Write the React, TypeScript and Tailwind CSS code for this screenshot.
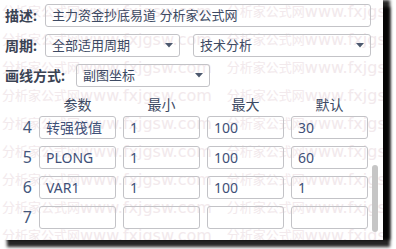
import React from 'react'

const labelCls = "text-[14px] font-bold text-[#3a4354]"
const boxCls = "h-[23px] border border-[#c3c3c7] rounded-[3px] flex items-center bg-transparent"

const Arrow = () => (
  <svg width="8" height="5" viewBox="0 0 8 5" className="shrink-0">
    <path d="M0 0 H8 L4 4.5 Z" fill="#4d596e" />
  </svg>
)

const Select: React.FC<{ text: string; className: string }> = ({ text, className }) => (
  <div className={`${boxCls} ${className} pl-[6px] pr-[6px] justify-between`}>
    <span className="text-[13px] text-[#3d4a63]">{text}</span>
    <Arrow />
  </div>
)

const Cell: React.FC<{ value?: string }> = ({ value }) => (
  <div className={`${boxCls} pl-[6px] text-[14px] text-[#3f5078]`}>{value}</div>
)

const Watermark = () => (
  <div className="absolute inset-0 overflow-hidden pointer-events-none">
    <div className="-mt-[2px] flex flex-col">
      {Array.from({ length: 10 }).map((_, i) => (
        <div key={i} className="h-[28px] flex items-center pl-[2px] gap-[15px] whitespace-nowrap text-[#f2e9ec]">
          {[0, 1].map((j) => (
            <span key={j} className="flex items-center">
              <span className="text-[13px]">分析家公式网</span>
              <span className="text-[16px] font-['DejaVu_Sans',sans-serif]">www.fxjgsw.com</span>
            </span>
          ))}
        </div>
      ))}
    </div>
  </div>
)

const rows = [
  { n: '4', name: '转强筏值', min: '1', max: '100', def: '30' },
  { n: '5', name: 'PLONG', min: '1', max: '100', def: '60' },
  { n: '6', name: 'VAR1', min: '1', max: '100', def: '1' },
  { n: '7', name: '', min: '', max: '', def: '' },
]

export default function App() {
  return (
    <div className="w-[396px] h-[249px] bg-white overflow-hidden font-['Noto_Sans','Noto_Sans_CJK_SC',sans-serif]">
      <div className="relative w-[383px] h-[240px] bg-white shadow-[7px_7px_3px_rgba(0,0,0,0.85),7px_0_3px_rgba(0,0,0,0.85)]">
        <Watermark />
        <div className="relative flex flex-col pl-[5px] pt-[4px]">
          <div className="flex items-center">
            <span className={`${labelCls} w-[40px]`}>描述:</span>
            <div className={`${boxCls} w-[326px] pl-[6px] text-[13px] text-[#3d4a63]`}>主力资金抄底易道 分析家公式网</div>
          </div>
          <div className="flex items-center mt-[7px]">
            <span className={`${labelCls} w-[40px]`}>周期:</span>
            <Select text="全部适用周期" className="w-[135px]" />
            <Select text="技术分析" className="w-[178px] ml-[13px]" />
          </div>
          <div className="flex items-center mt-[7px]">
            <span className={`${labelCls} w-[71px]`}>画线方式:</span>
            <Select text="副图坐标" className="w-[134px]" />
          </div>

          <div className="flex">
            <div className="flex flex-col">
              <div className="grid grid-cols-[27px_77px_77px_77px_77px] gap-x-[7px] mt-[7px] h-[16px] items-center text-[14px] text-[#3d4a63] text-center">
                <span />
                <span>参数</span>
                <span>最小</span>
                <span>最大</span>
                <span>默认</span>
              </div>
              <div className="grid grid-cols-[27px_77px_77px_77px_77px] gap-x-[7px] gap-y-[7px] mt-[6px]">
                {rows.map((r) => (
                  <React.Fragment key={r.n}>
                    <span className="text-[16px] text-[#44577c] text-right leading-[23px]">{r.n}</span>
                    <Cell value={r.name} />
                    <Cell value={r.min} />
                    <Cell value={r.max} />
                    <Cell value={r.def} />
                  </React.Fragment>
                ))}
              </div>
            </div>
            <div className="ml-[4px] w-[6px]">
              <div className="mt-[78px] h-[67px] rounded-full bg-[#c6c6c6]" />
            </div>
          </div>
        </div>
      </div>
    </div>
  )
}
